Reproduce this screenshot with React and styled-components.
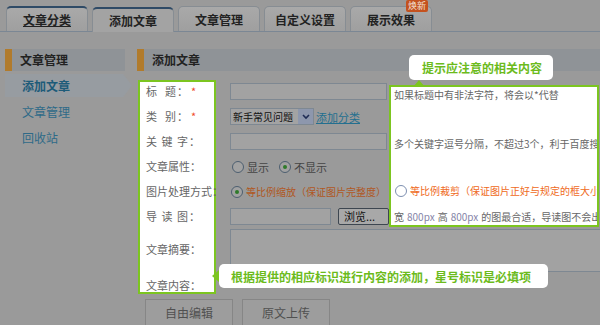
import React from 'react';
import styled, { createGlobalStyle } from 'styled-components';

const GlobalStyle = createGlobalStyle`
  body {
    margin: 0;
    font-family: "Noto Sans CJK SC", "Noto Sans", sans-serif;
    font-size: 11px;
    color: #555;
  }
`;

const green = '#7cc520';

const Page = styled.div`
  position: relative;
  width: 600px;
  height: 325px;
  overflow: hidden;
  background: #9a9a9a;
`;

const TabBar = styled.div`
  display: flex;
  align-items: flex-end;
  gap: 4px;
  height: 32px;
  padding-left: 6px;
  border-bottom: 1px solid #7b8794;
  box-sizing: border-box;
`;

const Tab = styled.div`
  position: relative;
  width: 82px;
  height: 25px;
  box-sizing: border-box;
  border: 1px solid #878d93;
  border-top: ${p => (p.$dark ? '2px solid #2e4a66' : '1px solid #878d93')};
  border-bottom: none;
  border-radius: 5px 5px 0 0;
  background: ${p => (p.$active ? '#a3a3a3' : 'linear-gradient(#a9a9a9, #9f9f9f)')};
  margin-bottom: ${p => (p.$active ? '-1px' : '0')};
  display: flex;
  align-items: center;
  justify-content: center;
  font-size: 12px;
  font-weight: bold;
  color: #222;
  text-decoration: ${p => (p.$link ? 'underline' : 'none')};
`;

const Badge = styled.span`
  position: absolute;
  top: -7px;
  right: 3px;
  padding: 0 2px;
  height: 12px;
  line-height: 12px;
  font-size: 9px;
  font-weight: normal;
  color: #f3e2d8;
  background: #c4521f;
  border-radius: 2px;
`;

const Content = styled.div`
  display: flex;
  padding-top: 17px;
`;

const Sidebar = styled.div`
  width: 127px;
  margin-left: 5px;
  margin-right: 5px;
  flex-shrink: 0;
`;

const SideHeader = styled.div`
  width: 120px;
  height: 22px;
  box-sizing: border-box;
  border-left: 7px solid #b17b2c;
  background: #8f9397;
  padding-left: 8px;
  line-height: 22px;
  font-size: 12px;
  font-weight: bold;
  color: #222;
`;

const SideActive = styled.div`
  margin-top: 3px;
  height: 23px;
  width: 127px;
  display: flex;
  align-items: center;
  padding-left: 17px;
  box-sizing: border-box;
  font-size: 12px;
  font-weight: bold;
  color: #1d5b79;
  background: #979ca1;
  clip-path: polygon(0 0, 93% 0, 100% 50%, 93% 100%, 0 100%);
`;

const SideItem = styled.div`
  height: 26px;
  line-height: 26px;
  padding-left: 17px;
  font-size: 12px;
  color: #2f6a88;
`;

const SideList = styled.div`
  padding-top: 2px;
`;

const Main = styled.div`
  flex: 1;
  min-width: 0;
`;

const MainHeader = styled(SideHeader)`
  width: auto;
`;

const Form = styled.div`
  display: flex;
  margin-top: 8px;
`;

const LabelBox = styled.div`
  width: 78px;
  height: 214px;
  margin-top: 1px;
  margin-left: 1px;
  box-sizing: border-box;
  border: 2px solid ${green};
  background: #fff;
  padding-left: 6px;
  flex-shrink: 0;
`;

const Label = styled.div`
  height: ${p => p.$h || 25}px;
  padding-top: ${p => p.$pt || 0}px;
  box-sizing: border-box;
  line-height: 18px;
  color: #666;
  white-space: pre;
  letter-spacing: ${p => (p.$spaced ? '1px' : '0')};
`;

const Star = styled.span`
  color: #f04a2a;
  margin-left: 2px;
`;

const Fields = styled.div`
  margin-left: 14px;
  flex: 1;
  min-width: 0;
`;

const Top = styled.div`
  display: flex;
  align-items: flex-start;
`;

const InputsCol = styled.div`
  width: 159px;
  flex-shrink: 0;
`;

const Row = styled.div`
  height: 25px;
  display: flex;
  align-items: center;
  white-space: nowrap;
`;

const TextInput = styled.div`
  width: ${p => p.$w || 157}px;
  height: 17px;
  box-sizing: border-box;
  border: 1px solid #7e8892;
  background: #a2a2a2;
`;

const Select = styled.div`
  width: 84px;
  height: 17px;
  box-sizing: border-box;
  border: 1px solid #7e8892;
  background: #a3a3a3;
  display: flex;
  align-items: center;
  justify-content: space-between;
  padding-left: 2px;
  color: #111;
  font-size: 10px;
`;

const SelectArrow = styled.span`
  width: 15px;
  height: 15px;
  background: #8d97ad;
  display: flex;
  align-items: center;
  justify-content: center;
`;

const Link = styled.span`
  margin-left: 2px;
  color: #236f8f;
  text-decoration: underline;
`;

const Radio = styled.span`
  width: 10px;
  height: 10px;
  border-radius: 50%;
  border: 1px solid ${p => (p.$light ? '#7d8fb0' : '#4d5f70')};
  background: ${p => (p.$light ? '#fff' : '#a2a2a2')};
  display: inline-flex;
  align-items: center;
  justify-content: center;
  margin: 0 3px 0 ${p => p.$ml || 0}px;
  flex-shrink: 0;
  &::after {
    content: '';
    display: ${p => (p.$on ? 'block' : 'none')};
    width: 4px;
    height: 4px;
    border-radius: 50%;
    background: #2f7a2a;
  }
`;

const RadioText = styled.span`
  color: ${p => p.$c || '#444'};
  font-size: ${p => p.$fs || 11}px;
`;

const Browse = styled.div`
  margin-left: 7px;
  width: 51px;
  height: 17px;
  box-sizing: border-box;
  border: 1px solid #3d4650;
  border-radius: 2px;
  background: #a8a8a8;
  color: #111;
  line-height: 15px;
  padding-left: 5px;
`;

const TipBox = styled.div`
  width: 210px;
  margin-top: 6px;
  box-sizing: border-box;
  border: 2px solid ${green};
  background: #fff;
  padding-left: 3px;
  overflow: hidden;
  flex-shrink: 0;
  font-size: 10px;
`;

const TipLine = styled.div`
  margin-top: ${p => p.$mt || 0}px;
  height: 16px;
  line-height: 16px;
  white-space: nowrap;
  display: flex;
  align-items: center;
  color: #666;
`;

const Px = styled.span`
  color: #8585a8;
  margin: 0 3px;
`;

const TextArea = styled.div`
  width: 400px;
  height: 43px;
  box-sizing: border-box;
  border: 1px solid #7e8892;
  background: #a2a2a2;
`;

const Buttons = styled.div`
  display: flex;
  gap: 9px;
  margin: 5px 0 0 8px;
`;

const Button = styled.div`
  width: 88px;
  height: 27px;
  box-sizing: border-box;
  border: 1px solid #868686;
  background: #9d9d9d;
  display: flex;
  align-items: center;
  justify-content: center;
  color: #505050;
  font-size: 12px;
`;

const Callout = styled.div`
  position: absolute;
  left: ${p => p.$x}px;
  top: ${p => p.$y}px;
  width: ${p => p.$w}px;
  height: ${p => p.$h}px;
  box-sizing: border-box;
  background: #fff;
  border-radius: 5px;
  color: #6cbb1c;
  font-size: 12px;
  font-weight: bold;
  display: flex;
  align-items: center;
  padding-left: ${p => p.$pl}px;
  white-space: nowrap;
`;

const ArrowUp = styled.span`
  position: absolute;
  left: 4px;
  bottom: -7px;
  width: 0;
  height: 0;
  border-left: 6px solid transparent;
  border-right: 6px solid transparent;
  border-bottom: 7px solid ${green};
`;

const ArrowLeft = styled.span`
  position: absolute;
  left: -7px;
  top: 6px;
  width: 0;
  height: 0;
  border-top: 6px solid transparent;
  border-bottom: 6px solid transparent;
  border-right: 7px solid ${green};
`;

export default function App() {
  return (
    <Page>
      <GlobalStyle />
      <TabBar>
        <Tab $dark $link>文章分类</Tab>
        <Tab $dark $active>添加文章</Tab>
        <Tab>文章管理</Tab>
        <Tab>自定义设置</Tab>
        <Tab>
          展示效果
          <Badge>焕新</Badge>
        </Tab>
      </TabBar>
      <Content>
        <Sidebar>
          <SideHeader>文章管理</SideHeader>
          <SideActive>添加文章</SideActive>
          <SideList>
            <SideItem>文章管理</SideItem>
            <SideItem>回收站</SideItem>
          </SideList>
        </Sidebar>
        <Main>
          <MainHeader>添加文章</MainHeader>
          <Form>
            <LabelBox>
              <Label $spaced>标  题：<Star>*</Star></Label>
              <Label $spaced>类  别：<Star>*</Star></Label>
              <Label $spaced>关 键 字：</Label>
              <Label>文章属性：</Label>
              <Label>图片处理方式：</Label>
              <Label $spaced>导 读 图：</Label>
              <Label $h={44} $pt={8}>文章摘要：</Label>
              <Label>文章内容：</Label>
            </LabelBox>
            <Fields>
              <Top>
                <InputsCol>
                  <Row><TextInput /></Row>
                  <Row>
                    <Select>
                      新手常见问题
                      <SelectArrow>
                        <svg width="8" height="6" viewBox="0 0 8 6">
                          <path d="M1 1 L4 4 L7 1" stroke="#1f2d55" strokeWidth="1.6" fill="none" />
                        </svg>
                      </SelectArrow>
                    </Select>
                    <Link>添加分类</Link>
                  </Row>
                  <Row><TextInput /></Row>
                  <Row>
                    <Radio $ml={2} />
                    <RadioText>显示</RadioText>
                    <Radio $ml={10} $on />
                    <RadioText>不显示</RadioText>
                  </Row>
                  <Row>
                    <Radio $ml={1} $on />
                    <RadioText $c="#b0571f" $fs={10}>等比例缩放（保证图片完整度）</RadioText>
                  </Row>
                  <Row>
                    <TextInput $w={101} />
                    <Browse>浏览...</Browse>
                  </Row>
                </InputsCol>
                <TipBox>
                  <TipLine>如果标题中有非法字符，将会以*代替</TipLine>
                  <TipLine $mt={33}>多个关键字逗号分隔，不超过3个，利于百度搜索</TipLine>
                  <TipLine $mt={31}>
                    <Radio $light $ml={1} />
                    <RadioText $c="#ef6a22" $fs={10}>等比例裁剪（保证图片正好与规定的框大小一致）</RadioText>
                  </TipLine>
                  <TipLine $mt={10}>
                    宽<Px>800px</Px>高<Px>800px</Px>的图最合适，导读图不会出现变形
                  </TipLine>
                </TipBox>
              </Top>
              <TextArea />
            </Fields>
          </Form>
          <Buttons>
            <Button>自由编辑</Button>
            <Button>原文上传</Button>
          </Buttons>
        </Main>
      </Content>
      <Callout $x={409} $y={55} $w={144} $h={25} $pl={13}>
        提示应注意的相关内容
        <ArrowUp />
      </Callout>
      <Callout $x={219} $y={264} $w={329} $h={24} $pl={12}>
        根据提供的相应标识进行内容的添加，星号标识是必填项
        <ArrowLeft />
      </Callout>
    </Page>
  );
}
